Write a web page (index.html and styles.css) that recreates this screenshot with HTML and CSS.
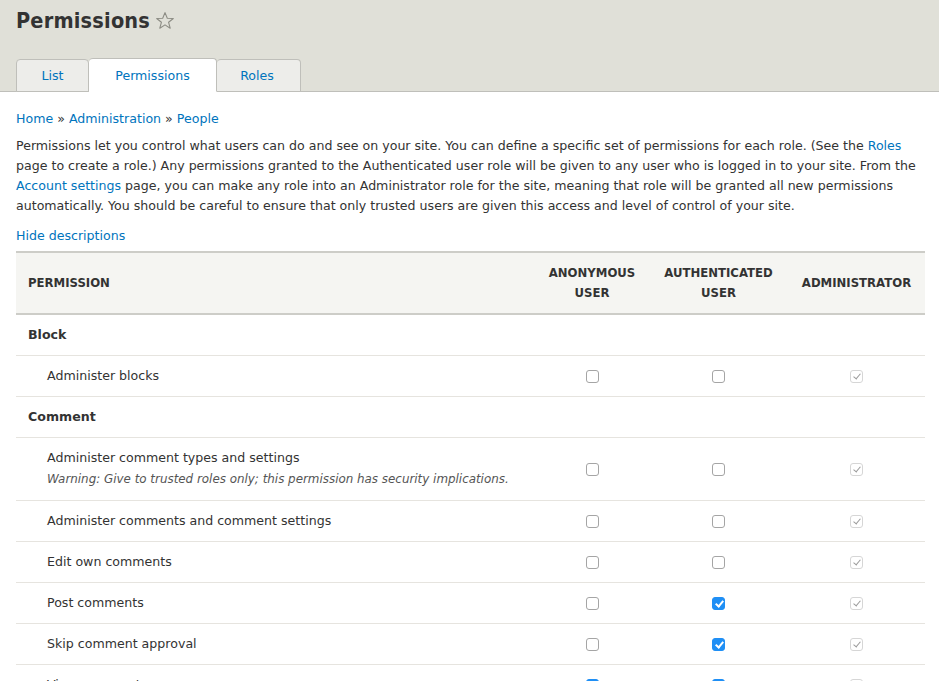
FILE: index.html
```html
<!DOCTYPE html>
<html lang="en">
<head>
<meta charset="utf-8">
<title>Permissions</title>
<link rel="stylesheet" href="styles.css">
</head>
<body>
<header class="page-header">
  <h1 class="page-title">Permissions <span class="star"><svg width="20" height="20" viewBox="0 0 20 20"><path d="M10 1.6 L12.3 7.2 L18.3 7.5 L13.6 11.3 L15.2 17.2 L10 13.9 L4.8 17.2 L6.4 11.3 L1.7 7.5 L7.7 7.2 Z" fill="none" stroke="#8c8c84" stroke-width="1.1" stroke-linejoin="round"/></svg></span></h1>
  <nav class="tabs">
    <a class="tab">List</a>
    <a class="tab active">Permissions</a>
    <a class="tab">Roles</a>
  </nav>
</header>
<main class="content">
  <div class="breadcrumb"><a>Home</a> » <a>Administration</a> » <a>People</a></div>
  <p class="intro">Permissions let you control what users can do and see on your site. You can define a specific set of permissions for each role. (See the <a>Roles</a> page to create a role.) Any permissions granted to the Authenticated user role will be given to any user who is logged in to your site. From the <a>Account settings</a> page, you can make any role into an Administrator role for the site, meaning that role will be granted all new permissions automatically. You should be careful to ensure that only trusted users are given this access and level of control of your site.</p>
  <div class="toggle"><a>Hide descriptions</a></div>
  <table class="perm-table">
    <thead>
      <tr>
        <th class="col-perm">Permission</th>
        <th class="col-role c1">Anonymous<br>user</th>
        <th class="col-role c2">Authenticated<br>user</th>
        <th class="col-role c3">Administrator</th>
      </tr>
    </thead>
    <tbody>
      <tr class="module"><td colspan="4">Block</td></tr>
      <tr>
        <td class="perm">Administer blocks</td>
        <td class="cb"><span class="box"></span></td>
        <td class="cb"><span class="box"></span></td>
        <td class="cb"><span class="box disabled"></span></td>
      </tr>
      <tr class="module"><td colspan="4">Comment</td></tr>
      <tr>
        <td class="perm">Administer comment types and settings<div class="desc">Warning: Give to trusted roles only; this permission has security implications.</div></td>
        <td class="cb"><span class="box"></span></td>
        <td class="cb"><span class="box"></span></td>
        <td class="cb"><span class="box disabled"></span></td>
      </tr>
      <tr>
        <td class="perm">Administer comments and comment settings</td>
        <td class="cb"><span class="box"></span></td>
        <td class="cb"><span class="box"></span></td>
        <td class="cb"><span class="box disabled"></span></td>
      </tr>
      <tr>
        <td class="perm">Edit own comments</td>
        <td class="cb"><span class="box"></span></td>
        <td class="cb"><span class="box"></span></td>
        <td class="cb"><span class="box disabled"></span></td>
      </tr>
      <tr>
        <td class="perm">Post comments</td>
        <td class="cb"><span class="box"></span></td>
        <td class="cb"><span class="box checked"></span></td>
        <td class="cb"><span class="box disabled"></span></td>
      </tr>
      <tr>
        <td class="perm">Skip comment approval</td>
        <td class="cb"><span class="box"></span></td>
        <td class="cb"><span class="box checked"></span></td>
        <td class="cb"><span class="box disabled"></span></td>
      </tr>
      <tr>
        <td class="perm">View comments</td>
        <td class="cb"><span class="box checked"></span></td>
        <td class="cb"><span class="box checked"></span></td>
        <td class="cb"><span class="box disabled"></span></td>
      </tr>
    </tbody>
  </table>
</main>
</body>
</html>
```
FILE: styles.css
```css
html, body {
  margin: 0;
  padding: 0;
  background: #fff;
}
body {
  font-family: "DejaVu Sans", "Liberation Sans", sans-serif;
  font-size: 12.6px;
  color: #333;
  overflow: hidden;
}
a {
  color: #0074bd;
  text-decoration: none;
}
.page-header {
  background: #e0e0d8;
  padding: 0 16px;
  border-bottom: 1px solid #bfbfba;
}
.page-title {
  margin: 0 0 22px;
  padding-top: 6px;
  height: 30px;
  font-family: "DejaVu Sans Condensed", "DejaVu Sans", sans-serif;
  font-size: 21.5px;
  font-weight: bold;
  color: #333;
  letter-spacing: 0.2px;
  line-height: 30px;
  display: flex;
  align-items: center;
}
.star {
  margin-left: 5px;
  display: inline-flex;
  margin-top: 0;
}
.tabs {
  display: flex;
  height: 34px;
  margin-bottom: -1px;
}
.tab {
  display: flex;
  align-items: center;
  justify-content: center;
  margin-top: 1px;
  background: #ededea;
  border: 1px solid #bfbfba;
  border-radius: 4px 4px 0 0;
  color: #0074bd;
  box-sizing: border-box;
  height: 33px;
}
.tab:nth-child(1) { width: 73px; }
.tab:nth-child(2) { width: 128px; }
.tab:nth-child(3) { width: 84px; border-left: 0; padding-right: 3px; }
.tab.active {
  background: #fff;
  border-bottom-color: #fff;
  height: 34px;
  margin-top: 0;
  border-left: 0;
}
.content {
  padding: 17px 14px 0 16px;
}
.breadcrumb {
  line-height: 20px;
  margin-bottom: 7px;
}
.intro {
  margin: 0 0 10px;
  line-height: 20px;
}
.toggle {
  line-height: 20px;
  margin-bottom: 5px;
}
.perm-table {
  width: 100%;
  border-collapse: collapse;
  border-top: 2px solid #cdcdc8;
}
.perm-table th {
  background: #f5f5f2;
  font-size: 11.7px;
  font-weight: bold;
  text-transform: uppercase;
  color: #333;
  line-height: 20px;
  padding: 10px 12px;
  border-bottom: 2px solid #cdcdc8;
  text-align: center;
}
.perm-table th.col-perm { text-align: left; }
.perm-table th.c1 { width: 90px; }
.perm-table th.c2 { width: 115px; }
.perm-table th.c3 { width: 113px; }
.perm-table td {
  padding: 10px 12px;
  line-height: 20px;
  border-bottom: 1px solid #e6e4df;
  vertical-align: middle;
}
.module td {
  font-weight: bold;
}
.perm-table td.perm {
  padding-left: 31px;
}
.desc {
  font-style: italic;
  font-size: 11.9px;
  color: #555;
  line-height: 22px;
}
.cb {
  text-align: center;
}
.box {
  display: inline-block;
  width: 11px;
  height: 11px;
  border: 1px solid #a5a5a5;
  border-radius: 3px;
  background: #fff;
  vertical-align: middle;
  position: relative;
  box-sizing: content-box;
}
.box.checked {
  background: #1f8ff5;
  border-color: #1f8ff5;
}
.box.checked::after,
.box.disabled::after {
  content: "";
  position: absolute;
  left: 3.5px;
  top: 1px;
  width: 3px;
  height: 6px;
  border: solid #fff;
  border-width: 0 2px 2px 0;
  transform: rotate(40deg);
}
.box.disabled {
  border-color: #d6d6d6;
}
.box.disabled::after {
  border-color: #9a9a9a;
  border-width: 0 1.5px 1.5px 0;
}
```
